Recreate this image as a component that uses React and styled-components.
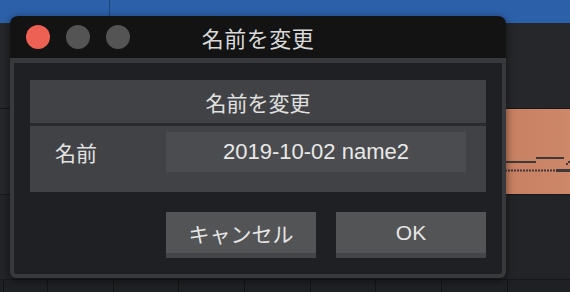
import React from "react";
import styled, { createGlobalStyle } from "styled-components";

const GlobalStyle = createGlobalStyle`
  html, body {
    margin: 0;
    padding: 0;
    background: #1f2023;
  }
  body {
    font-family: "Liberation Sans", "Noto Sans CJK JP", sans-serif;
  }
`;

const Stage = styled.div`
  position: relative;
  width: 570px;
  height: 292px;
  overflow: hidden;
  background: #1f2023;
  display: flex;
  flex-direction: column;
`;

const Ruler = styled.div`
  height: 23px;
  flex: none;
  display: flex;
  background: #2c61aa;
`;

const RulerCell = styled.div`
  width: ${(p) => p.$w}px;
  flex: none;
  border-right: 1px solid #1e4479;
`;

const Track = styled.div`
  height: ${(p) => p.$h}px;
  flex: none;
  display: flex;
  background: ${(p) => p.$bg};
  border-bottom: 1px solid #17181a;
`;

const GridTrack = styled.div`
  flex: 1;
  background-color: #1f2023;
  background-image: repeating-linear-gradient(
    to right,
    #141517 0,
    #141517 1px,
    transparent 1px,
    transparent 65.7px
  );
  background-position: 47px 0;
`;

const Clip = styled.div`
  margin-left: ${(p) => p.$start}px;
  flex: 1;
  background: linear-gradient(to right, #bf7456, #cd8769);
  svg {
    display: block;
  }
`;

const Window = styled.div`
  position: absolute;
  left: 10px;
  top: 16px;
  width: 496px;
  height: 262px;
  display: flex;
  flex-direction: column;
  border-radius: 8px 8px 6px 6px;
  overflow: hidden;
  box-shadow: 0 2px 8px rgba(0, 0, 0, 0.55);
`;

const TitleBar = styled.div`
  height: 42px;
  flex: none;
  background: #131313;
  display: grid;
  grid-template-columns: 1fr auto 1fr;
  align-items: center;
  padding: 0 16px;
`;

const Lights = styled.div`
  display: flex;
  gap: 16px;
`;

const Light = styled.span`
  width: 24px;
  height: 24px;
  border-radius: 50%;
  background: ${(p) => p.$color};
`;

const Title = styled.div`
  font-size: 22px;
  color: #d9d9d9;
  letter-spacing: 0.5px;
`;

const Body = styled.div`
  flex: 1;
  background: #1f2023;
  border: 4px solid #38393c;
  border-top-width: 5px;
  border-radius: 0 0 6px 6px;
  padding: 17px 16px 16px;
  display: flex;
  flex-direction: column;
  gap: 20px;
`;

const Panel = styled.div`
  background: #414245;
  display: flex;
  flex-direction: column;
`;

const PanelHeader = styled.div`
  height: 43px;
  display: flex;
  align-items: center;
  justify-content: center;
  font-size: 21px;
  color: #e0e0e0;
  border-bottom: 3px solid #2a2b2e;
`;

const FieldRow = styled.div`
  height: 66px;
  box-sizing: border-box;
  padding: 6px 20px 20px 25px;
  display: grid;
  grid-template-columns: 111px 1fr;
  align-items: center;
`;

const Label = styled.label`
  font-size: 21px;
  color: #e2e2e2;
`;

const TextField = styled.input`
  height: 40px;
  box-sizing: border-box;
  width: 100%;
  border: none;
  outline: none;
  padding: 0;
  background: #4b4c4f;
  color: #e8e8e8;
  font-family: "Liberation Sans", "Noto Sans CJK JP", sans-serif;
  font-size: 22px;
  text-align: center;
`;

const ButtonRow = styled.div`
  display: flex;
  justify-content: flex-end;
  gap: 20px;
`;

const Button = styled.button`
  width: 150px;
  height: 46px;
  box-sizing: border-box;
  border: none;
  padding: 0 0 5px;
  background: #535456;
  box-shadow: inset 0 -5px 0 #444548;
  color: #e6e6e6;
  font-family: "Liberation Sans", "Noto Sans CJK JP", sans-serif;
  font-size: 21px;
`;

const Waveform = () => (
  <svg width="170" height="85" viewBox="0 0 170 85">
    <g stroke="#3f3a39" strokeWidth="2" fill="none">
      <line x1="0" y1="53" x2="136" y2="53" />
      <line x1="136" y1="49" x2="164" y2="49" />
      <line x1="168" y1="53" x2="170" y2="53" />
      <line x1="0" y1="61.5" x2="156" y2="61.5" strokeDasharray="2 1" />
      <line x1="156" y1="61.5" x2="170" y2="61.5" strokeWidth="3" />
    </g>
    <rect x="166" y="54" width="2" height="2" fill="#3f3a39" />
  </svg>
);

export default function App() {
  return (
    <>
      <GlobalStyle />
      <Stage>
        <Ruler>
          <RulerCell $w={109} />
        </Ruler>
        <Track $h={85} $bg="#26272a" />
        <Track $h={85} $bg="#26272a">
          <Clip $start={400}>
            <Waveform />
          </Clip>
        </Track>
        <Track $h={84} $bg="#232427" />
        <GridTrack />

        <Window>
          <TitleBar>
            <Lights>
              <Light $color="#ed6054" />
              <Light $color="#545454" />
              <Light $color="#545454" />
            </Lights>
            <Title>名前を変更</Title>
            <span />
          </TitleBar>
          <Body>
            <Panel>
              <PanelHeader>名前を変更</PanelHeader>
              <FieldRow>
                <Label htmlFor="name">名前</Label>
                <TextField id="name" defaultValue="2019-10-02 name2" readOnly />
              </FieldRow>
            </Panel>
            <ButtonRow>
              <Button>キャンセル</Button>
              <Button>OK</Button>
            </ButtonRow>
          </Body>
        </Window>
      </Stage>
    </>
  );
}
